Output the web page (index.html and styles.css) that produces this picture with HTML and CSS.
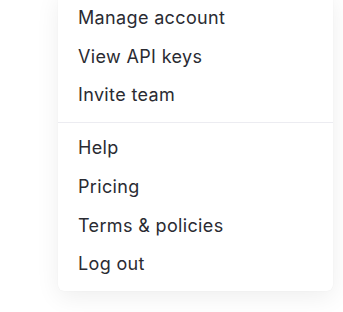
FILE: index.html
```html
<!DOCTYPE html>
<html lang="en">
<head>
    <meta charset="UTF-8">
    <meta name="viewport" content="width=device-width, initial-scale=1.0">
    <title>Account menu</title>
    <link rel="stylesheet" href="styles.css">
</head>
<body>
    <div class="menu">
        <div class="menu-section">
            <a href="#" class="menu-item">Manage account</a>
            <a href="#" class="menu-item">View API keys</a>
            <a href="#" class="menu-item">Invite team</a>
        </div>
        <div class="menu-section">
            <a href="#" class="menu-item">Help</a>
            <a href="#" class="menu-item">Pricing</a>
            <a href="#" class="menu-item">Terms &amp; policies</a>
            <a href="#" class="menu-item">Log out</a>
        </div>
    </div>
</body>
</html>
```

FILE: styles.css
```css
body {
    font-family: Inter, 'Noto Sans', sans-serif;
    margin: 0;
    background-color: #fff;
    display: flex;
    justify-content: flex-end;
    padding-right: 10px;
    height: 312px;
    overflow: hidden;
    box-sizing: border-box;
    color: #202123;
}
.menu {
    width: 275px;
    height: 298px;
    margin-top: -7px;
    background-color: #fff;
    border-radius: 6px;
    box-shadow: 0 0 1px 0 rgba(0, 0, 0, 0.08), 0 6px 24px 0 rgba(0, 0, 0, 0.07);
}
.menu-section {
    padding: 6px 0 7px;
}
.menu-section + .menu-section {
    border-top: 1px solid #ececf1;
    padding-top: 6px;
}
.menu-item {
    display: block;
    padding: 0 20px;
    font-size: 18px;
    line-height: 38.7px;
    letter-spacing: 0.35px;
    color: #2a2b32;
    text-decoration: none;
}
```
